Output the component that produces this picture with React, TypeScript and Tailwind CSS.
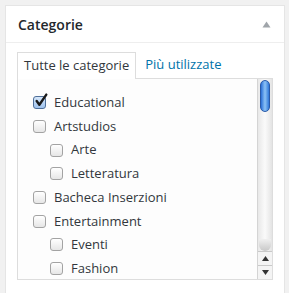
import React from "react";

const items: { label: string; level: number; checked?: boolean }[] = [
  { label: "Educational", level: 0, checked: true },
  { label: "Artstudios", level: 0 },
  { label: "Arte", level: 1 },
  { label: "Letteratura", level: 1 },
  { label: "Bacheca Inserzioni", level: 0 },
  { label: "Entertainment", level: 0 },
  { label: "Eventi", level: 1 },
  { label: "Fashion", level: 1 },
];

function Box({ checked }: { checked?: boolean }) {
  return (
    <div
      className={
        "relative w-[13px] h-[13px] rounded-[3px] border shrink-0 " +
        (checked
          ? "border-[#4f6f99] bg-gradient-to-b from-[#d6e7fa] to-[#9fc2ec]"
          : "border-[#a3a3a3] bg-gradient-to-b from-[#ffffff] to-[#e6e6e6]")
      }
    >
      {checked && (
        <svg className="absolute left-[0px] top-[-4px]" width="15" height="15" viewBox="0 0 14 14">
          <path d="M2.5 7.5 L5 11 L11.5 1.5" fill="none" stroke="#1a1a1a" strokeWidth="2.2" strokeLinecap="round" strokeLinejoin="round" />
        </svg>
      )}
    </div>
  );
}

export default function App() {
  return (
    <div className="w-[289px] h-[293px] overflow-hidden bg-[#f1f1f1] pl-[5px] pt-[5px]" style={{ fontFamily: '"Open Sans", "Noto Sans", sans-serif' }}>
      <div className="w-[280px] h-[320px] bg-white border border-[#e5e5e5]">
        <div className="h-[37px] border-b border-[#eeeeee] flex items-center justify-between pl-[12px] pr-[13px]">
          <span className="text-[14px] font-semibold text-[#23282d] leading-none mt-[1px]">Categorie</span>
          <svg width="9" height="7" viewBox="0 0 9 7" className="mt-[1px]">
            <path d="M4.5 0.5 L8.5 6.5 L0.5 6.5 Z" fill="#a0a5aa" />
          </svg>
        </div>
        <div className="pl-[11px] pt-[9px]">
          <div className="flex items-end h-[26px]">
            <div className="h-[27px] border border-b-0 border-[#dddddd] bg-white px-[6px] flex items-center text-[13px] text-[#32373c] relative z-10 -mb-[1px]">
              Tutte le categorie
            </div>
            <div className="h-[26px] pl-[9px] flex items-center text-[13px] text-[#0073aa]">Più utilizzate</div>
          </div>
          <div className="w-[256px] h-[202px] border border-[#dddddd] bg-[#fdfdfd] flex">
            <div className="flex-1 pt-[12px] pl-[15px]">
              {items.map((it) => (
                <div
                  key={it.label}
                  className={"h-[23.7px] flex items-center gap-[8px] text-[13px] text-[#32373c] whitespace-nowrap " + (it.level ? "pl-[17px]" : "")}
                >
                  <Box checked={it.checked} />
                  <span>{it.label}</span>
                </div>
              ))}
            </div>
            <div className="w-[15px] h-full flex flex-col bg-gradient-to-r from-[#e8e8e8] via-[#fafafa] to-[#e4e4e4] border-l border-[#d4d4d4]">
              <div className="flex-1 pt-[1px] px-[1px] flex flex-col">
                <div className="h-[32px] mx-[1px] rounded-full bg-gradient-to-r from-[#2a6fd6] via-[#8cc2f5] to-[#2f77d8] border border-[#2a5aa8]" />
                <div className="flex-1" />
                <div className="h-[12px] rounded-b-full bg-gradient-to-b from-[#f0f0f0] to-[#c8c8c8]" />
              </div>
              <div className="h-[14px] border-t border-[#c9c9c9] flex items-center justify-center bg-[#f4f4f4]">
                <svg width="7" height="5" viewBox="0 0 7 5"><path d="M3.5 0 L7 5 L0 5 Z" fill="#333" /></svg>
              </div>
              <div className="h-[14px] border-t border-[#c9c9c9] flex items-center justify-center bg-[#f4f4f4]">
                <svg width="7" height="5" viewBox="0 0 7 5"><path d="M0 0 L7 0 L3.5 5 Z" fill="#333" /></svg>
              </div>
            </div>
          </div>
        </div>
      </div>
    </div>
  );
}
